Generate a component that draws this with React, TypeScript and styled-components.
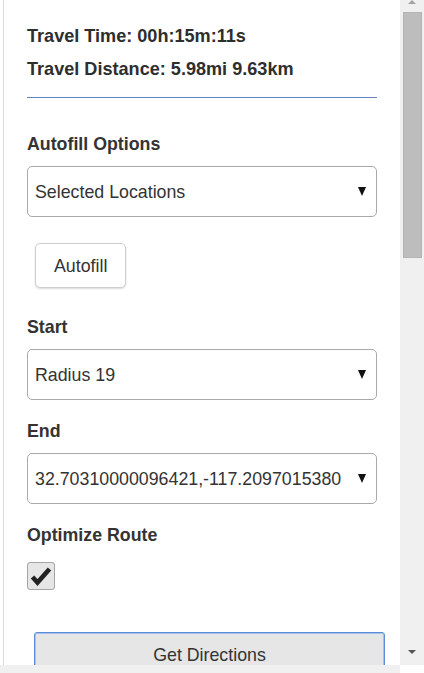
import React from "react";
import styled, { createGlobalStyle } from "styled-components";

const Global = createGlobalStyle`
  html, body { margin: 0; padding: 0; background: #ffffff; }
  body { font-family: "Liberation Sans", Arial, sans-serif; color: #333; }
  * { box-sizing: border-box; }
`;

const Page = styled.div`
  width: 424px;
  height: 673px;
  display: flex;
  flex-direction: column;
  overflow: hidden;
  background: #fff;
`;

const Main = styled.div`
  display: flex;
  height: 665px;
  flex: none;
`;

const Panel = styled.div`
  flex: 1;
  margin-left: 3px;
  border-left: 1px solid #dcdcdc;
  padding: 26px 23px 0 23px;
  overflow: hidden;
  display: flex;
  flex-direction: column;
  align-items: flex-start;
  font-size: 17.8px;
  & > * {
    flex-shrink: 0;
  }
`;

const Stat = styled.div<{ $gap?: number }>`
  font-weight: bold;
  font-size: 18.1px;
  line-height: 20px;
  color: #2e2e2e;
  margin-bottom: ${(p) => p.$gap ?? 0}px;
  white-space: nowrap;
`;

const Rule = styled.div`
  align-self: stretch;
  height: 1.5px;
  background: #5f88c0;
  margin-top: 17.5px;
`;

const Label = styled.div<{ $top: number }>`
  font-weight: bold;
  line-height: 20px;
  color: #333;
  margin-top: ${(p) => p.$top}px;
  margin-bottom: 12px;
`;

const SelectBox = styled.div`
  align-self: stretch;
  height: 51px;
  border: 1px solid #a9a9a9;
  border-radius: 5px;
  display: flex;
  align-items: center;
  justify-content: space-between;
  padding: 0 10px 0 7px;
  background: #fff;
`;

const SelectValue = styled.span`
  line-height: 20px;
  color: #333;
  white-space: nowrap;
  overflow: hidden;
`;

const Arrow = styled.span`
  width: 0;
  height: 0;
  flex: none;
  border-left: 4.5px solid transparent;
  border-right: 4.5px solid transparent;
  border-top: 9px solid #111;
  margin-left: 8px;
`;

const PlainButton = styled.button`
  margin: 26px 0 0 8px;
  height: 45px;
  padding: 0 18px;
  background: #fff;
  border: 1px solid #cfcfcf;
  border-radius: 5px;
  box-shadow: 0 1px 2px rgba(0, 0, 0, 0.15);
  font-family: "Liberation Sans", Arial, sans-serif;
  font-size: 17.8px;
  line-height: 20px;
  color: #333;
`;

const Check = styled.div`
  width: 28px;
  height: 28px;
  border: 1px solid #a5a5a5;
  border-radius: 3px;
  background: #e6e6e6;
  display: flex;
  align-items: center;
  justify-content: center;
  margin-top: 5px;
`;

const WideButton = styled.button`
  margin: 42px 0 0 7px;
  width: 351px;
  height: 45px;
  padding: 0;
  background: #e6e6e6;
  border: 1px solid #5b8ed6;
  box-shadow: inset 0 0 0 1px #a3c3ee;
  border-radius: 3px;
  font-family: "Liberation Sans", Arial, sans-serif;
  font-size: 17.8px;
  line-height: 20px;
  color: #333;
  text-align: center;
`;

const VScroll = styled.div`
  width: 24px;
  background: #f0f0f0;
  display: flex;
  flex-direction: column;
  align-items: center;
`;

const UpArrow = styled.span`
  width: 0;
  height: 0;
  border-left: 4px solid transparent;
  border-right: 4px solid transparent;
  border-bottom: 4px solid #a3a3a3;
`;

const Thumb = styled.div`
  width: 19px;
  height: 246px;
  margin: 8px 0 0 1px;
  background: #bdbdbd;
  border: 1px solid #b4b4b4;
`;

const Spacer = styled.div`
  flex: 1;
`;

const DownArrow = styled.span`
  width: 0;
  height: 0;
  border-left: 4px solid transparent;
  border-right: 4px solid transparent;
  border-top: 4px solid #555;
  margin-bottom: 11px;
`;

const Bottom = styled.div`
  display: flex;
  height: 8px;
  flex: none;
`;

const HStrip = styled.div`
  flex: 1;
  background: #f0f0f0;
`;

const Corner = styled.div`
  width: 24px;
  background: #fff;
`;

function Select({ value }: { value: string }) {
  return (
    <SelectBox>
      <SelectValue>{value}</SelectValue>
      <Arrow />
    </SelectBox>
  );
}

export default function App() {
  return (
    <>
      <Global />
      <Page>
        <Main>
          <Panel>
            <Stat $gap={13}>Travel Time: 00h:15m:11s</Stat>
            <Stat>Travel Distance: 5.98mi 9.63km</Stat>
            <Rule />
            <Label $top={36}>Autofill Options</Label>
            <Select value="Selected Locations" />
            <PlainButton>Autofill</PlainButton>
            <Label $top={29}>Start</Label>
            <Select value="Radius 19" />
            <Label $top={21}>End</Label>
            <Select value="32.70310000096421,-117.2097015380" />
            <Label $top={21}>Optimize Route</Label>
            <Check>
              <svg width="22" height="22" viewBox="0 0 22 22">
                <path d="M2.5 12 L7.5 17.5 L19.5 4" fill="none" stroke="#222" strokeWidth="4.6" />
              </svg>
            </Check>
            <WideButton>Get Directions</WideButton>
          </Panel>
          <VScroll>
            <UpArrow />
            <Thumb />
            <Spacer />
            <DownArrow />
          </VScroll>
        </Main>
        <Bottom>
          <HStrip />
          <Corner />
        </Bottom>
      </Page>
    </>
  );
}
